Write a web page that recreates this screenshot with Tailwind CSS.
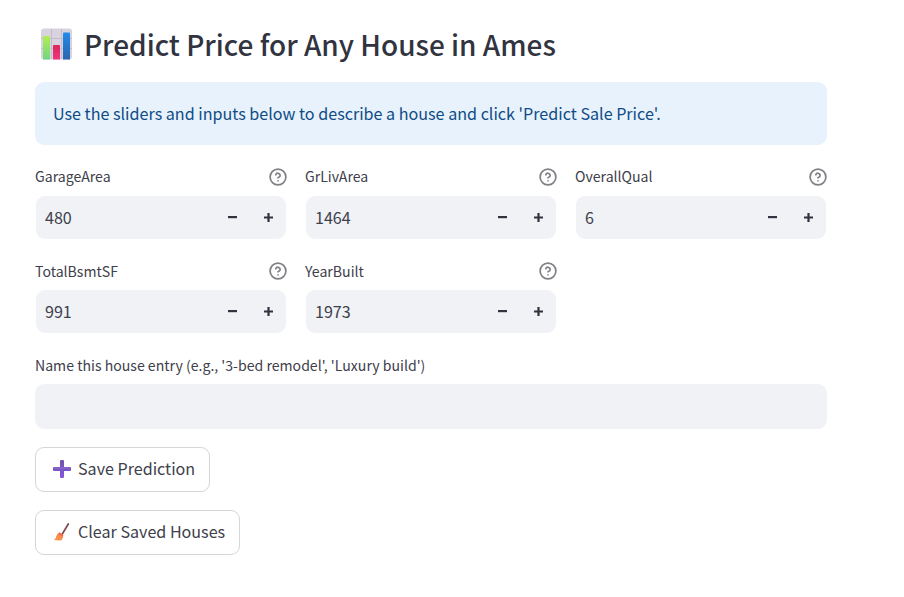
<!DOCTYPE html>
<html lang="en">
<head>
<meta charset="utf-8">
<title>Predict Price for Any House in Ames</title>
<script src="https://cdn.jsdelivr.net/npm/@tailwindcss/browser@4"></script>
</head>
<body class="bg-white text-[#3e404b] font-['Noto_Sans_CJK_SC','Noto_Sans',sans-serif]">
<svg class="hidden">
  <symbol id="help" viewBox="0 0 24 24" fill="none" stroke="#808187" stroke-width="2.3" stroke-linecap="round" stroke-linejoin="round"><circle cx="12" cy="12" r="10.5"/><path d="M9.09 9a3 3 0 0 1 5.83 1c0 2-3 3-3 3M12 17h.01"/></symbol>
  <symbol id="minus" viewBox="0 0 9 9"><path fill="#31333f" d="M0 3h9v2.200H0z"/></symbol>
  <symbol id="plus" viewBox="0 0 9 9"><path fill="#31333f" d="M3.400 0h2.200v3.400H9v2.200H5.600V9H3.400V5.600H0V3.400h3.400z"/></symbol>
</svg>
<main class="ml-[35px] w-[792px] pt-[23px]">
  <h1 class="flex h-[42px] items-center text-[27.96px] leading-[42px] font-medium text-[#31333f]">
    <svg class="ml-[5px] mr-[12px] h-8 w-8 shrink-0" viewBox="0 0 32 32">
      <defs>
        <linearGradient id="g1" x2="0" y2="1"><stop stop-color="#b0ee50"/><stop offset="1" stop-color="#72d583"/></linearGradient>
        <linearGradient id="g2" x2="0" y2="1"><stop stop-color="#d92858"/><stop offset="1" stop-color="#ef3680"/></linearGradient>
        <linearGradient id="g3" x2="0" y2="1"><stop stop-color="#218bea"/><stop offset="1" stop-color="#2866ad"/></linearGradient>
      </defs>
      <rect x="1" y="0.500" width="31" height="31" rx="3" fill="#d8d3df"/>
      <path d="M11.500 1v30M21.500 1v30M1 10.500h31M1 20.500h31" stroke="#c2bbcb" stroke-width="1"/>
      <path d="M3 31.500V9q0-1 1-1h5q1 0 1 1v22.500z" fill="url(#g1)"/>
      <path d="M13 31.500V18q0-1 1-1h5q1 0 1 1v13.500z" fill="url(#g2)"/>
      <path d="M23 31.500V5.500q0-1 1-1h5q1 0 1 1v26z" fill="url(#g3)"/>
    </svg>
    <span class="whitespace-nowrap">Predict Price for Any House in Ames</span>
  </h1>
  <div class="mt-[17px] flex h-[63px] items-center rounded-[9px] bg-[#e8f2fc] px-[18px] text-[16.12px] text-[#0f4c86]"><span class="whitespace-nowrap">Use the sliders and inputs below to describe a house and click 'Predict Sale Price'.</span></div>
  <section id="fields" class="mt-[19px] grid grid-cols-3 gap-x-[18px] gap-y-[18px]"></section>
  <label class="mt-[19px] block h-[24px] text-[14.1px] leading-[24px]"><span>Name this house entry (e.g., '3-bed remodel', 'Luxury build')</span></label>
  <div class="mt-[7px] h-[45px] rounded-[9px] bg-[#f0f2f6]"></div>
  <button class="mt-[18px] flex h-[45px] w-[175px] items-center rounded-[9px] border border-[#d6d6d9] pb-[2px] pl-[17px] text-[16.1px]">
    <svg class="mr-[7px] h-[18px] w-[18px] shrink-0" viewBox="0 0 18 18">
      <defs><linearGradient id="g4" x2="0" y2="1"><stop stop-color="#6f55ac"/><stop offset="1" stop-color="#8656e0"/></linearGradient></defs>
      <path d="M8 0h2q1 0 1 1v6h6q1 0 1 1v2q0 1-1 1h-6v6q0 1-1 1H8q-1 0-1-1v-6H1q-1 0-1-1V8q0-1 1-1h6V1q0-1 1-1z" fill="url(#g4)"/>
      <path d="M1 8h16" stroke="#8d70c8" stroke-width="1"/>
    </svg>
    <span class="whitespace-nowrap">Save Prediction</span>
  </button>
  <button class="mt-[18px] flex h-[45px] w-[205px] items-center rounded-[9px] border border-[#d6d6d9] pb-[2px] pl-[17px] text-[16.1px]">
    <svg class="mr-[7px] h-[18px] w-[18px] shrink-0" viewBox="0 0 18 18">
      <path d="M15.300 1 9.300 11" stroke="#804b50" stroke-width="1.700" stroke-linecap="round"/>
      <path d="M6.500 9.500 10.200 12q.3 3.500-2.200 5.500L1 17q2-1.500 2.200-3.500Q4 10.500 6.500 9.500z" fill="#fa8545"/>
      <path d="m6.500 9.500 3.700 2.500-.3 1.600-4.600-3.100z" fill="#ec6854"/>
      <path d="m6 12.500-3 4M8 13.500l-2 3.500" stroke="#ffaf66" stroke-width=".7"/>
    </svg>
    <span class="whitespace-nowrap">Clear Saved Houses</span>
  </button>
</main>
<script>
const fields = [['GarageArea', 480], ['GrLivArea', 1464], ['OverallQual', 6], ['TotalBsmtSF', 991], ['YearBuilt', 1973]];
document.getElementById('fields').innerHTML = fields.map(([name, value], i) => `
  <div class="h-[76px] w-[252px]">
    <div class="flex h-[26px] items-center justify-between text-[14.1px] ${i < 3 ? 'leading-[24px]' : 'leading-[26px]'}"><span class="h-[26px]">${name}</span><svg class="h-[18px] w-[18px]"><use href="#help"/></svg></div>
    <div class="mx-px mt-[6px] flex h-[43px] items-center rounded-[9px] bg-[#f0f2f6] pl-[9px] text-[16.1px]">
      <span class="flex-1">${value}</span>
      <svg class="mr-[27px] h-[9px] w-[9px]"><use href="#minus"/></svg>
      <svg class="mr-[13px] h-[9px] w-[9px]"><use href="#plus"/></svg>
    </div>
  </div>`).join('');
</script>
</body>
</html>
